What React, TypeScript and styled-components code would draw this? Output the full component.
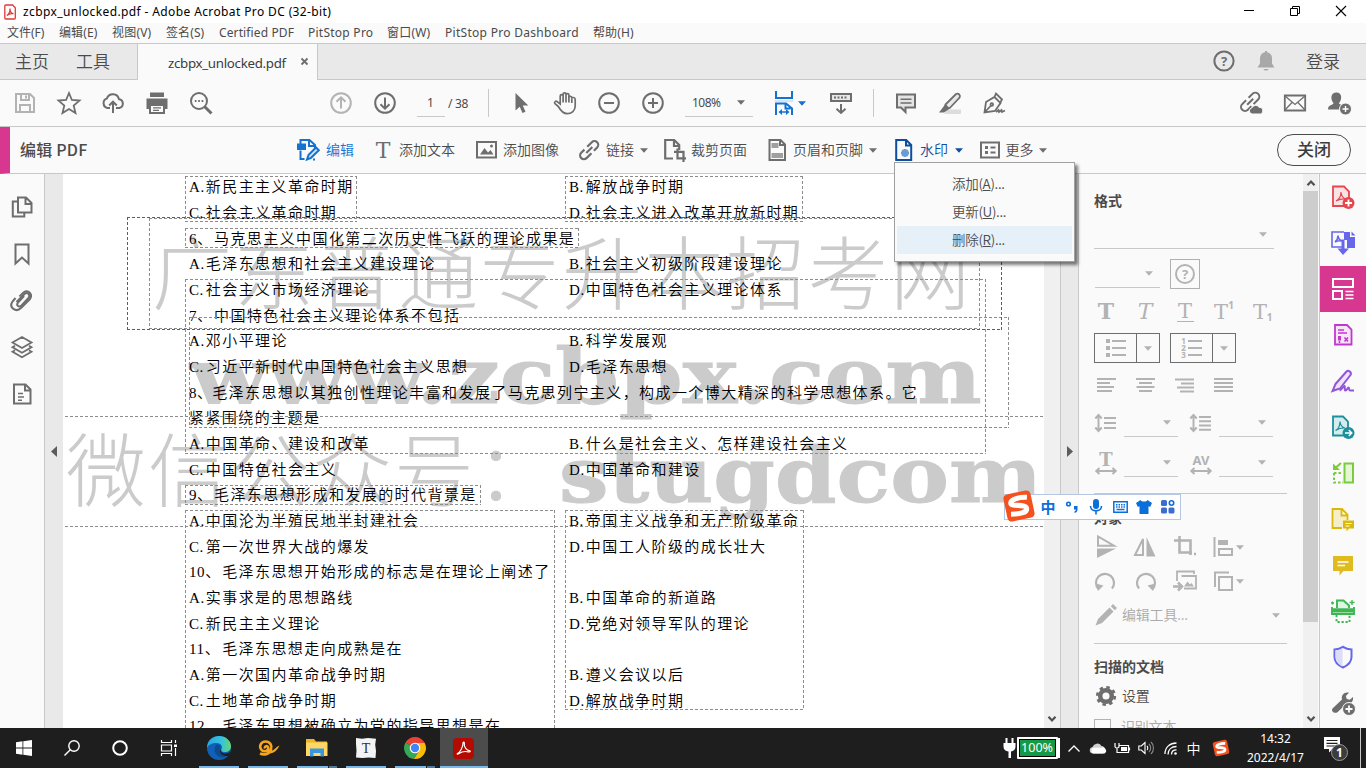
import React from 'react';
import styled, { createGlobalStyle, css } from 'styled-components';

const INK = '#6e6e6e';
const PALE = '#b3b3b3';
const BLUE = '#1473d0';
const NAVY = '#0d4f9e';
const LINE = '#c8c8c8';

const GlobalStyle = createGlobalStyle`
  * { box-sizing: border-box; }
  body { margin: 0; overflow: hidden; background: #fff; }
  svg { display: block; flex: none; overflow: visible; }
`;

const Screen = styled.div`
  width: 1366px;
  height: 768px;
  display: flex;
  flex-direction: column;
  position: relative;
  overflow: hidden;
  background: #fafafa;
  color: #4b4b4b;
  font-family: 'Noto Sans CJK SC', sans-serif;
  font-size: 14px;
  font-weight: 350;
  white-space: nowrap;
`;

/* ---------- icon primitives ---------- */

type IconProps = { w?: number; h?: number; c?: string; sw?: number; fill?: string; children: React.ReactNode };
const Icon = ({ w = 24, h = 24, c = INK, sw = 2, fill = 'none', children }: IconProps) => (
  <svg width={w} height={h} viewBox={`0 0 ${w} ${h}`} fill={fill} stroke={c} strokeWidth={sw}>
    {children}
  </svg>
);

const Caret = ({ c = INK }: { c?: string }) => (
  <svg width="8" height="5" viewBox="0 0 8 5" fill={c}><path d="M0 0.3h8L4 4.8z" /></svg>
);

const Chevron = ({ up }: { up?: boolean }) => (
  <svg width="8" height="6" viewBox="0 0 8 6" fill="none" stroke="#505050" strokeWidth="2.2">
    <path d={up ? 'M0.5 5.2 4 1.5 7.5 5.2' : 'M0.5 0.8 4 4.5 7.5 0.8'} />
  </svg>
);

const T = ({ x, y, s, f = 'DejaVu Serif', b, i, c, children }: {
  x: number; y: number; s: number; f?: string; b?: boolean; i?: boolean; c: string; children: string;
}) => (
  <text x={x} y={y} fontSize={s} fontFamily={`'${f}', serif`} fontWeight={b ? 700 : 400}
    fontStyle={i ? 'italic' : 'normal'} fill={c} stroke="none" textAnchor="middle">{children}</text>
);

/* ---------- title and menu ---------- */

const TitleBar = styled.header`
  height: 23px;
  flex: none;
  display: flex;
  align-items: center;
  background: #fff;
  color: #000;
  padding-left: 4px;
  font: 12px/23px 'Noto Sans', 'Noto Sans CJK SC', sans-serif;
`;
const TitleText = styled.span`
  margin-left: 7px;
  letter-spacing: 0.38px;
  flex: 1;
`;
const WindowButtons = styled.div`
  display: flex;
  align-items: center;
  gap: 34px;
  padding-right: 19px;
`;
const MenuBar = styled.nav`
  height: 21px;
  flex: none;
  display: flex;
  gap: 14px;
  padding-left: 7px;
  border-bottom: 1px solid ${LINE};
  font: 12px/19px 'Noto Sans', 'Noto Sans CJK SC', sans-serif;
`;
const MenuItem = styled.span<{ $w: number; $ls?: number }>`
  width: ${p => p.$w}px;
  letter-spacing: ${p => p.$ls ?? 0}px;
`;

const menus: [string, number, number][] = [
  ['文件(F)', 38, 0], ['编辑(E)', 39, 0.1], ['视图(V)', 40, 0.2], ['签名(S)', 39, 0.1],
  ['Certified PDF', 75, 0.12], ['PitStop Pro', 65, 0.25], ['窗口(W)', 44, 0.2],
  ['PitStop Pro Dashboard', 134, 0.29], ['帮助(H)', 41, 0.1],
];

/* ---------- tabs ---------- */

const TabBar = styled.div`
  height: 36px;
  flex: none;
  display: flex;
  background: #e9e9e9;
`;
const HomeTabs = styled.div`
  width: 137px;
  padding: 0 0 3px 15px;
  display: flex;
  align-items: center;
  gap: 27px;
  font-size: 17px;
  border-bottom: 1px solid ${LINE};
`;
const DocTab = styled.div`
  width: 181px;
  display: flex;
  align-items: center;
  padding: 1px 0 0 30px;
  background: #fafafa;
  border: solid ${LINE};
  border-width: 0 1px;
  color: #3c3c3c;
  font: 13.3px 'Noto Sans', sans-serif;
`;
const TabName = styled.span`
  width: 133px;
  letter-spacing: -0.3px;
`;
const TabRest = styled.div`
  flex: 1;
  display: flex;
  align-items: center;
  justify-content: flex-end;
  gap: 18px;
  padding: 0 26px 1px 0;
  border-bottom: 1px solid ${LINE};
  font-size: 17px;
`;
const Login = styled.span`
  margin-left: 10px;
  line-height: 30px;
`;

/* ---------- main toolbar ---------- */

const ToolBar = styled.div`
  height: 47px;
  flex: none;
  display: flex;
  align-items: center;
  border-bottom: 1px solid ${LINE};
`;
const Group = styled.div<{ $ml?: number }>`
  display: flex;
  align-items: center;
  margin-left: ${p => p.$ml ?? 0}px;
`;
const Slot = styled.div<{ $w?: number }>`
  width: ${p => p.$w ?? 44}px;
  display: flex;
  justify-content: center;
`;
const Divider = styled.i<{ $l: number; $r: number }>`
  width: 1px;
  height: 28px;
  margin: 0 ${p => p.$r}px 0 ${p => p.$l}px;
  background: ${LINE};
`;
const ValueBox = styled.div<{ $w: number; $ml: number; $pl: number }>`
  width: ${p => p.$w}px;
  height: 28px;
  margin-left: ${p => p.$ml}px;
  padding-left: ${p => p.$pl}px;
  display: flex;
  align-items: center;
  border-bottom: 1px solid ${LINE};
  font: 12px 'Noto Sans', sans-serif;
`;
const ZoomText = styled.span`
  width: 45px;
  letter-spacing: -0.5px;
`;
const PageTotal = styled.span`
  width: 22px;
  margin-left: 3px;
  font: 12px 'Noto Sans', sans-serif;
  letter-spacing: -0.3px;
`;

/* ---------- edit toolbar ---------- */

const EditBar = styled.div`
  height: 47px;
  flex: none;
  display: flex;
  align-items: center;
  border-bottom: 1px solid ${LINE};
  border-left: 10px solid #d83790;
`;
const EditTitle = styled.strong`
  width: 286px;
  padding: 0 0 2px 10px;
  font-size: 16px;
  font-weight: 500;
  letter-spacing: 0.2px;
`;
const EditItem = styled.div<{ $w: number; $gap?: number; $c?: string }>`
  width: ${p => p.$w}px;
  display: flex;
  align-items: center;
  padding-bottom: 2px;
  gap: ${p => p.$gap ?? 6}px;
  color: ${p => p.$c ?? '#4b4b4b'};
  & > svg { margin-top: 2px; }
`;
const CloseButton = styled.button`
  width: 74px;
  height: 32px;
  margin: 0 15px 0 auto;
  padding: 0 0 3px;
  border: 1.4px solid #4b4b4b;
  border-radius: 16px;
  background: transparent;
  color: #3c3c3c;
  font: 500 17px 'Noto Sans CJK SC', sans-serif;
`;

/* ---------- body ---------- */

const Body = styled.main`
  height: 554px;
  flex: none;
  display: flex;
  overflow: hidden;
`;
const LeftRail = styled.aside`
  width: 45px;
  display: flex;
  flex-direction: column;
  align-items: center;
  padding-top: 21px;
  gap: 22.8px;
  border-right: 1px solid ${LINE};
`;
const Gutter = styled.div<{ $border?: boolean }>`
  width: 18px;
  display: flex;
  align-items: center;
  justify-content: center;
  background: #e9e9e9;
  ${p => p.$border && css`border-right: 1px solid ${LINE};`}
`;
const Page = styled.article`
  width: 981px;
  position: relative;
  overflow: hidden;
  background: #fff;
  color: #000;
`;
const PageText = styled.div`
  position: relative;
  padding: 1px 0 0 126px;
`;
const TextRow = styled.div`
  height: 25.675px;
  display: grid;
  grid-template-columns: 380px 1fr;
  align-items: center;
  font: 350 15px/25px 'Liberation Serif', 'Noto Sans CJK SC', serif;
  letter-spacing: 1.42px;
`;
const Cell = styled.span`
  display: flex;
`;
const Label = styled.span<{ $w: number }>`
  width: ${p => p.$w}px;
  flex: none;
  letter-spacing: 0.6px;
`;
const Watermark = styled.div<{ $x: number; $y: number }>`
  position: absolute;
  left: ${p => p.$x}px;
  top: ${p => p.$y}px;
  color: #cbcbcb;
  font: 300 80px/100px 'Noto Sans CJK SC', sans-serif;
  letter-spacing: 2px;
`;
const WatermarkLatin = styled(Watermark)<{ $sx: number }>`
  font: 700 77px/100px 'DejaVu Serif', serif;
  letter-spacing: 0;
  transform-origin: 0 0;
  transform: scaleX(${p => p.$sx});
  -webkit-text-stroke: 1px #cbcbcb;
`;
const Frame = styled.i<{ $x: number; $y: number; $r: number; $b: number; $c?: string }>`
  position: absolute;
  left: ${p => p.$x - 63}px;
  top: ${p => p.$y - 174}px;
  width: ${p => p.$r - p.$x + 1}px;
  height: ${p => p.$b - p.$y + 1}px;
  --c: ${p => p.$c ?? '#8c8c8c'};
  background:
    repeating-linear-gradient(90deg, var(--c) 0 3px, transparent 3px 5px) 0 0 / 100% 1px no-repeat,
    repeating-linear-gradient(90deg, var(--c) 0 3px, transparent 3px 5px) 0 100% / 100% 1px no-repeat,
    repeating-linear-gradient(180deg, var(--c) 0 3px, transparent 3px 5px) 0 0 / 1px 100% no-repeat,
    repeating-linear-gradient(180deg, var(--c) 0 3px, transparent 3px 5px) 100% 0 / 1px 100% no-repeat;
`;

const rows: [string, string, string?, string?][] = [
  ['A.', '新民主主义革命时期', 'B.', '解放战争时期'],
  ['C.', '社会主义革命时期', 'D.', '社会主义进入改革开放新时期'],
  ['6、', '马克思主义中国化第二次历史性飞跃的理论成果是'],
  ['A.', '毛泽东思想和社会主义建设理论', 'B.', '社会主义初级阶段建设理论'],
  ['C.', '社会主义市场经济理论', 'D.', '中国特色社会主义理论体系'],
  ['7、', '中国特色社会主义理论体系不包括'],
  ['A.', '邓小平理论', 'B.', '科学发展观'],
  ['C.', '习近平新时代中国特色社会主义思想', 'D.', '毛泽东思想'],
  ['8、', '毛泽东思想以其独创性理论丰富和发展了马克思列宁主义，构成一个博大精深的科学思想体系。它'],
  ['', '紧紧围绕的主题是'],
  ['A.', '中国革命、建设和改革', 'B.', '什么是社会主义、怎样建设社会主义'],
  ['C.', '中国特色社会主义', 'D.', '中国革命和建设'],
  ['9、', '毛泽东思想形成和发展的时代背景是'],
  ['A.', '中国沦为半殖民地半封建社会', 'B.', '帝国主义战争和无产阶级革命'],
  ['C.', '第一次世界大战的爆发', 'D.', '中国工人阶级的成长壮大'],
  ['10、', '毛泽东思想开始形成的标志是在理论上阐述了'],
  ['A.', '实事求是的思想路线', 'B.', '中国革命的新道路'],
  ['C.', '新民主主义理论', 'D.', '党绝对领导军队的理论'],
  ['11、', '毛泽东思想走向成熟是在'],
  ['A.', '第一次国内革命战争时期', 'B.', '遵义会议以后'],
  ['C.', '土地革命战争时期', 'D.', '解放战争时期'],
  ['12、', '毛泽东思想被确立为党的指导思想是在'],
];
const labelWidth = (s: string) => (s === '' ? 0 : s.endsWith('.') ? 16.8 : s.length === 3 ? 33.2 : s[0] === '8' ? 23.2 : 25);

const frames: [number, number, number, number, string?][] = [
  [185, 176, 356, 221], [565, 176, 802, 221], [149, 218, 979, 328],
  [185, 228, 578, 247], [185, 279, 985, 453], [189, 317, 1008, 427], [60, 416, 1050, 526],
  [185, 485, 480, 504], [185, 510, 554, 740], [565, 510, 803, 709], [127, 217, 1001, 329, '#2268c4'],
];

const DocScroll = styled.div`
  width: 17px;
  display: flex;
  justify-content: center;
  align-items: flex-end;
  padding: 0 1px 6px 0;
  background: #f0f0f0;
  border-right: 1px solid ${LINE};
`;

/* ---------- format panel ---------- */

const Panel = styled.section`
  width: 224px;
  padding: 16px 0 0 15px;
  overflow: hidden;
`;
const PanelTitle = styled.h3<{ $mt?: number }>`
  margin: ${p => p.$mt ?? 0}px 0 0;
  height: 20px;
  font-size: 14px;
  line-height: 20px;
  font-weight: 700;
  color: #4b4b4b;
`;
const PanelRow = styled.div<{ $mt: number; $gap?: number }>`
  display: flex;
  align-items: center;
  gap: ${p => p.$gap ?? 0}px;
  margin-top: ${p => p.$mt}px;
`;
const Field = styled.div<{ $w: number; $ml?: number; $mr?: number }>`
  width: ${p => p.$w}px;
  height: 28px;
  margin: 0 ${p => p.$mr ?? 0}px 0 ${p => p.$ml ?? 0}px;
  padding-right: 7px;
  display: flex;
  align-items: center;
  justify-content: flex-end;
  border-bottom: 1px solid ${LINE};
`;
const HelpBox = styled.div`
  width: 30px;
  height: 30px;
  display: grid;
  place-items: center;
  border: 1px solid #b0b0b0;
`;
const SplitButton = styled.div`
  width: 66px;
  height: 30px;
  display: grid;
  grid-template-columns: 41px 1fr;
  border: 1px solid #6e6e6e;
  & > span { display: grid; place-items: center; }
  & > span + span { border-left: 1px solid #6e6e6e; }
`;
const Rule = styled.hr<{ $mt: number }>`
  width: 193px;
  height: 1px;
  margin: ${p => p.$mt}px 0 0;
  border: 0;
  background: ${LINE};
`;
const PanelLabel = styled.span<{ $pale?: boolean; $w?: number }>`
  width: ${p => p.$w ?? 150}px;
  margin-left: 4px;
  padding-bottom: 2px;
  line-height: 22px;
  letter-spacing: -0.2px;
  color: ${p => (p.$pale ? '#aaa' : '#4b4b4b')};
`;
const CheckBox = styled.i`
  width: 17px;
  height: 17px;
  margin-right: 6px;
  border: 1px solid #b3b3b3;
`;
const PanelScroll = styled.div`
  width: 15px;
  display: flex;
  flex-direction: column;
  align-items: center;
  padding: 6px 0;
  background: #f0f0f0;
`;
const Thumb = styled.i`
  width: 15px;
  height: 431px;
  margin: 5px 0 auto;
  background: #cdcdcd;
`;
const RightRail = styled.aside`
  width: 47px;
  margin-left: 1px;
  display: flex;
  flex-direction: column;
  border-left: 1px solid ${LINE};
`;
const RailSlot = styled.div<{ $on?: boolean }>`
  height: 46px;
  flex: none;
  display: grid;
  place-items: center;
  background: ${p => (p.$on ? '#d83790' : 'transparent')};
`;

/* ---------- popup menu ---------- */

const Popup = styled.div`
  position: absolute;
  left: 894px;
  top: 162px;
  width: 181px;
  height: 100px;
  padding: 7px 2px;
  background: #fafafa;
  border: 1px solid #a0a0a0;
  box-shadow: 3px 3px 3px rgba(0, 0, 0, 0.5);
`;
const PopupItem = styled.div<{ $on?: boolean }>`
  height: 28px;
  padding-left: 55px;
  font: 350 13.5px/27px 'Noto Sans CJK SC', sans-serif;
  letter-spacing: -0.3px;
  background: ${p => (p.$on ? '#e5f0f9' : 'transparent')};
`;

/* ---------- input method bar ---------- */

const ImeBar = styled.div`
  position: absolute;
  left: 1004px;
  top: 494px;
  width: 177px;
  height: 26px;
  display: flex;
  align-items: center;
  border: 1px solid #b4c8e6;
  background: #fff;
  padding-left: 31px;
`;
const ImeLogo = styled.div`
  position: absolute;
  left: -3px;
  top: -6px;
`;
const ImeSlot = styled.span`
  width: 24px;
  display: flex;
  justify-content: center;
  color: #0a6fdb;
  font: 700 15px/22px 'Noto Sans CJK SC', sans-serif;
`;

/* ---------- taskbar ---------- */

const TaskBar = styled.footer`
  height: 40px;
  flex: none;
  display: flex;
  background: #1e1e1e;
  color: #fff;
`;
const TaskButton = styled.div<{ $w: number; $run?: boolean; $on?: boolean; $multi?: boolean }>`
  width: ${p => p.$w}px;
  display: grid;
  place-items: center;
  ${p => p.$run && css`
    margin: 0 4.5px;
    background: linear-gradient(#76b9ed, #76b9ed) 0 100% / 100% 2px no-repeat;
  `}
  ${p => p.$multi && css`
    background: linear-gradient(90deg, #76b9ed 31px, #1e1e1e 31px 32px, #4d7ba0 32px) 0 100% / 100% 2px no-repeat;
  `}
  ${p => p.$on && css`
    background: linear-gradient(#76b9ed, #76b9ed) 0 100% / 100% 2px no-repeat, #4c4c4c;
  `}
`;
const Tray = styled.div`
  flex: 1;
  display: flex;
  align-items: center;
  padding-left: 514px;
`;
const Battery = styled.div`
  width: 41px;
  height: 22px;
  margin-right: 3px;
  border: 2px solid #fff;
  border-radius: 1px;
  box-shadow: 3px 0 0 -1px #fff;
  background: #149947;
  outline: 1px solid #000;
  outline-offset: -3px;
  text-align: center;
  font: 12.5px/17px 'Noto Sans', sans-serif;
`;
const Clock = styled.div`
  width: 90px;
  text-align: center;
  font: 12px/19px 'Noto Sans', sans-serif;
`;
const Ime = styled.span`
  font-size: 14px;
`;

const question = (c: string, r = 9.6) => (
  <Icon c={c}><circle cx="12" cy="12" r={r} /><T x={12} y={16.6} s={13} f="Noto Sans" b c={c}>?</T></Icon>
);

const SogouMark = ({ s }: { s: number }) => (
  <svg width={s} height={s} viewBox="0 0 32 32">
    <g transform="rotate(-12 16 16)">
      <rect x="3" y="3" width="26" height="26" rx="4" fill="#f4511e" />
      <path d="M25 9.5C17 7.5 9 8.500 9 12s13.500 3 13.500 7.500-8 4-15.500 2.500" fill="none" stroke="#fff" strokeWidth="4.800" />
    </g>
  </svg>
);

const lineSpacing = (n: number) => (
  <Icon c={PALE}>
    <path d="M4.5 5v14M1.3 7.5 4.5 4l3.2 3.5M1.3 16.5 4.5 20l3.2-3.5" />
    {n === 3 ? <path d="M10 7h12M10 12h12M10 17h12" /> : <path d="M10 6h12M10 10.3h12M10 14.6h12M10 18.8h12" />}
  </Icon>
);

const App = () => (
  <Screen>
    <GlobalStyle />
    <TitleBar>
      <Icon w={12} h={16} c="#e03a32" sw={1.3} fill="#fff">
        <path d="M1.8 1h6.7l2.8 2.8V14a1 1 0 0 1-1 1H1.8a1 1 0 0 1-1-1V2a1 1 0 0 1 1-1z" />
        <path d="M2.8 11.5C4.6 10.5 6 7.300 6 4.500c0 3 1.600 5 3.500 5.200C7 9.300 4.500 10 2.800 11.500z" strokeWidth="1.2" />
      </Icon>
      <TitleText>zcbpx_unlocked.pdf - Adobe Acrobat Pro DC (32-bit)</TitleText>
      <WindowButtons>
        <Icon w={12} h={12} c="#000" sw={1}><path d="M1 4.500h10" /></Icon>
        <Icon w={12} h={12} c="#000" sw={1}><path d="M1.500 2.500h7v7h-7zM3.500 2.500v-2h7v7h-2" /></Icon>
        <Icon w={12} h={12} c="#000" sw={1.1}><path d="M1 0l10 10M11 0 1 10" /></Icon>
      </WindowButtons>
    </TitleBar>
    <MenuBar>{menus.map(([t, w, ls]) => <MenuItem key={t} $w={w} $ls={ls}>{t}</MenuItem>)}</MenuBar>
    <TabBar>
      <HomeTabs><span>主页</span><span>工具</span></HomeTabs>
      <DocTab>
        <TabName>zcbpx_unlocked.pdf</TabName>
        <Icon w={7} h={7} sw={1.8}><path d="M0.500 -0.500l6 6M6.500 -0.500l-6 6" /></Icon>
      </DocTab>
      <TabRest>
        {question(INK)}
        <Icon fill="#a8a8a8" c="none">
          <path d="M11 2h2v1.300c3.500.6 5 3 5 6.200v5l2.500 4H3.500l2.500-4V9.500c0-3.200 1.500-5.600 5-6.200zM9.500 20h5c-.6 2-4.400 2-5 0z" />
        </Icon>
        <Login>登录</Login>
      </TabRest>
    </TabBar>

    <ToolBar>
      <Group $ml={3}>
        <Slot><Icon c={PALE}><path d="M3 3h14l4 4v14H3zM8 3v6h8V3M7 21v-7h10v7" /><path d="M13 4.500v3" /></Icon></Slot>
        <Slot><Icon sw={1.8}><path d="M12 2l2.900 7 7.600.6-5.800 5 1.800 7.400-6.500-4-6.500 4 1.800-7.400-5.800-5 7.600-.6z" /></Icon></Slot>
        <Slot><Icon><path d="M9 17H6.500a5 5 0 0 1-.6-9.600A6.300 6.300 0 0 1 18 8.200a4.500 4.500 0 0 1 .5 8.800H15M12 22V11M8.200 14.500 12 10.700l3.800 3.800" /></Icon></Slot>
        <Slot $w={43}>
          <Icon c="none" fill={INK}>
            <path d="M5 1.500h14v4.500H5zM1.500 7.500h21V18H19v-4H5v4H1.500z" />
            <path d="M5 14h14v8H5z" fill="#fafafa" stroke={INK} strokeWidth="2" /><path d="M8 16.800h8M8 19.300h6" stroke={INK} strokeWidth="1.200" />
          </Icon>
        </Slot>
        <Slot $w={45}><Icon><circle cx="10" cy="10" r="8" /><path d="M15.500 15.500l7 7" strokeWidth="3" /><path d="M5.800 10h1.700M9.200 10h1.700M12.600 10h1.700" /></Icon></Slot>
      </Group>
      <Group $ml={96}>
        <Slot><Icon c={PALE}><circle cx="12" cy="12" r="9.800" /><path d="M12 17.500v-11M7.500 10.800 12 6.300l4.500 4.500" /></Icon></Slot>
        <Slot><Icon><circle cx="12" cy="12" r="9.800" /><path d="M12 6.500v11M7.500 13.200l4.500 4.500 4.500-4.500" /></Icon></Slot>
      </Group>
      <ValueBox $w={28} $ml={10} $pl={10}>1</ValueBox>
      <PageTotal>/ 38</PageTotal>
      <Divider $l={18} $r={10} />
      <Group>
        <Slot><Icon c="none" fill={INK}><path d="M6.500 2v17.500l4.200-3.800 2.800 6.300 3-1.300-2.700-6.200h5.500z" /></Icon></Slot>
        <Slot>
          <Icon sw={1.700}>
            <path d="M5.300 15.500 2 12.700c-1.200-1.300.5-3.200 2.200-2.100L7.200 13V5c0-1.900 2.900-1.900 2.900 0V3.200c0-1.900 2.900-1.900 2.900 0V4c0-1.900 2.900-1.900 2.900 0v2.500c.2-1.800 2.900-1.600 2.900.3 0 0 3.200-1.300 3.400 1.500V15c0 4.500-3.500 7.700-8 7.700-4.300 0-6.500-3-8.900-7.200z" />
            <path d="M10.100 5v6.500M13 4v7.500M15.900 5.500v6M18.800 7.500V12" />
          </Icon>
        </Slot>
        <Slot><Icon><circle cx="12" cy="12" r="9.800" /><path d="M7 12h10" /></Icon></Slot>
        <Slot><Icon><circle cx="12" cy="12" r="9.800" /><path d="M7 12h10M12 7v10" /></Icon></Slot>
      </Group>
      <ValueBox $w={68} $ml={10} $pl={7}><ZoomText>108%</ZoomText><Caret /></ValueBox>
      <Group $ml={19}>
        <Slot $w={24}>
          <Icon c={BLUE}><path d="M3 9h18v2H3z" fill="#d4e6f7" stroke="none" /><path d="M4 0v7h16V0M4 24V12.500h10l6 5V24M13.500 12.500v5h5" /><path d="M8 21h8" strokeWidth="1.500" /><path d="M10 18l-3.500 3 3.500 3zM14 18l3.500 3-3.500 3z" fill={BLUE} stroke="none" /></Icon>
        </Slot>
        <Slot $w={12}><Caret c={BLUE} /></Slot>
        <Slot $w={66}>
          <Icon><path d="M2 3h20v7H2z" fill="#e8e8e8" /><path d="M5 6.500h2M8.500 6.500h2M12 6.500h2M15.500 6.500h2" /><path d="M12 13v9M7.500 17.800l4.500 4.200 4.500-4.200" /></Icon>
        </Slot>
      </Group>
      <Divider $l={-1} $r={10} />
      <Group>
        <Slot><Icon><path d="M3 3.500h18v13h-9.500V21L7 16.500H3z" fill="#e4e4e4" /><path d="M6.500 8.300h11M6.500 12h11" strokeWidth="1.500" /></Icon></Slot>
        <Slot>
          <Icon c="none"><path d="M9 18.500h14v4.500H6z" fill="#dcdcdc" /><path d="M7.500 13.500 18 3c2.500-1.200 4.800 1 3.600 3.600L11.800 17l-5 .5z" fill="#e8e8e8" stroke={INK} strokeWidth="1.800" /><path d="M7.500 13l4.500 4.500-6 4H1z" fill={INK} /></Icon>
        </Slot>
        <Slot>
          <Icon sw={1.8}><path d="M2.500 21.500 4 11l8.500-5 6 6-5.500 8zM3 21l6-6.500M12.500 6 14 2.500l6 6-2 3.500" /><circle cx="9.800" cy="13.500" r="1.300" /><path d="M14 21l2.500-2 .5 2 2.500-2 .5 2 3-1.500" /></Icon>
        </Slot>
      </Group>
      <Group $ml={213}>
        <Slot>
          <Icon>
            <g transform="rotate(-45 11 11)"><path d="M13 7h5.500a4 4 0 0 1 0 8H12M9.500 7H4a4 4 0 0 0 0 8h5M7 11h8.500" /></g>
            <path d="M13 23a3.200 3.200 0 0 1 0-6.300 4 4 0 0 1 7-.5 3.500 3.500 0 0 1 1.500 6.800z" fill={INK} stroke="#fafafa" strokeWidth="1" />
          </Icon>
        </Slot>
        <Slot><Icon sw={1.8}><path d="M1.800 4.500h20.400v15H1.800z" /><path d="M2 5l10 8.500L22 5M2 19l7-7.500M22 19l-7-7.500" strokeWidth="1.300" /></Icon></Slot>
        <Slot>
          <Icon c="none" fill={INK}>
            <path d="M9.500 1.500c6 0 5.500 7.500 2.500 10.500 0 2 5.500 1.500 5.500 6.500H1c0-5.500 5.500-4 5.500-6.500C3.500 9 3 1.500 9.500 1.500z" /><circle cx="18.500" cy="18" r="6" stroke="#fafafa" strokeWidth="1" /><path d="M15.500 18h6M18.500 15v6" stroke="#fff" strokeWidth="1.400" />
          </Icon>
        </Slot>
      </Group>
    </ToolBar>

    <EditBar>
      <EditTitle>编辑 PDF</EditTitle>
      <EditItem $w={79} $gap={6} $c={BLUE}>
        <Icon c={BLUE} sw={2}>
          <path d="M1 5.500h9v6.500H1z" fill={BLUE} stroke="none" /><path d="M4.500 6V2h9l5.500 5v3M13 2v6h6M4.500 12.500v8.500h4" /><path d="M12.500 17 20 9.500l2.800 2.800-7.800 7.500-4 1.700z" fill="#d4e6f7" /><path d="M17 21.500h2" />
        </Icon>
        编辑
      </EditItem>
      <EditItem $w={101} $gap={8}><Icon w={16}><T x={8} y={19.500} s={22} c={INK}>T</T></Icon>添加文本</EditItem>
      <EditItem $w={102} $gap={6}>
        <Icon w={21}><path d="M1 4h19v15.500H1z" /><path d="M4 16.500l4.500-6.500 3.500 4.500 2.500-2.500 3 4.500z" fill={INK} stroke="none" /><circle cx="15.500" cy="8" r="1.500" fill={INK} stroke="none" /></Icon>
        添加图像
      </EditItem>
      <EditItem $w={86} $gap={6}>
        <Icon w={22} sw={2.2}><g transform="rotate(-45 11 12)"><path d="M12 8.500h6.500a3.500 3.500 0 0 1 0 7.500H14M10.500 16H3.500a3.500 3.500 0 0 1 0-7.500H8M7 12.200h8.500" /></g></Icon>
        <span>链接</span><Caret />
      </EditItem>
      <EditItem $w={104} $gap={6}>
        <Icon w={21} sw={2.200}><path d="M9 20.500H1.200V2h9l5 5v5M10 2v6h5.500" /><path d="M10 13.800h9.500V24M13.500 10.500V20.300H22" /></Icon>
        裁剪页面
      </EditItem>
      <EditItem $w={127} $gap={6}>
        <Icon w={19}><path d="M1.500 2h11L17 6.500V22H1.500z" /><path d="M3.500 5h7v5h-7zM3.500 15h11.500v5H3.500z" fill="#a0a0a0" stroke="none" /><path d="M12 2v5h5" /></Icon>
        页眉和页脚<Caret />
      </EditItem>
      <EditItem $w={85} $gap={7} $c={NAVY}>
        <Icon w={18} c={NAVY}><path d="M1.200 2h10l5 5v15h-15zM11 2v5.500h5" /><path d="M10 11v8M6 15h8M7.200 12.200l5.600 5.600M12.800 12.200l-5.600 5.600" stroke="#6b9bd0" strokeWidth="2.400" /></Icon>
        <span>水印</span><Caret c={NAVY} />
      </EditItem>
      <EditItem $w={80} $gap={5.500}>
        <Icon w={20}><path d="M1 4.500h18v15H1z" /><path d="M5 9.500h3M5 14.500h3" strokeWidth="3" /><path d="M10.500 9.500h5M10.500 14.500h5" /></Icon>
        更多<Caret />
      </EditItem>
      <CloseButton>关闭</CloseButton>
    </EditBar>

    <Body>
      <LeftRail>
        <Icon><path d="M8 2.500h8l5.500 5.500v9.500H8zM15.500 3v6H21M7.500 6.500H2.800V21.500h11.500V18" /></Icon>
        <Icon><path d="M5.500 2.500h13v19L12 15.500l-6.500 6z" /></Icon>
        <Icon sw={2}><path d="M6 13.500 14 5.500c3-2.500 6.500 1 4 4l-7 7.500c-3 2.500-5.500-.5-3.500-3l6-6.500" transform="translate(0.500 -0.500)" /><path d="M5.500 9.500l-3 3.500c-4 6 3.500 11.500 8.500 6.500L20 10.500c3-4.500-1.500-10-6.500-6.500L9.500 8" transform="translate(0 -0.500)" /></Icon>
        <Icon sw={1.8}><path d="M12 2l9.500 5.500L12 13 2.500 7.500zM5 10.800l-2.500 1.500 9.500 5.500 9.500-5.500-2.500-1.500M5 15.300l-2.500 1.500L12 22.300l9.500-5.500-2.500-1.500" /></Icon>
        <Icon><path d="M4 2.500h11.500l5 5V21.500H4zM15 3v5.500h5" /><path d="M8 11.500h5M8 15h6M8 18.200h4" strokeWidth="1.500" /></Icon>
      </LeftRail>
      <Gutter><svg width="6" height="11" viewBox="0 0 6 11"><path d="M6 0v11L0 5.500z" fill="#5c5c5c" /></svg></Gutter>
      <Page>
        <Watermark $x={89} $y={44}>广东普通专升本招考网</Watermark>
        <Watermark $x={3} $y={241}>微信公众号：</Watermark>
        <WatermarkLatin $x={127} $y={152} $sx={1.184}>www.zcbpx.com</WatermarkLatin>
        <WatermarkLatin $x={496} $y={251} $sx={1.144}>stugdcom</WatermarkLatin>
        <PageText>
          {rows.map(([l1, t1, l2, t2], i) => (
            <TextRow key={i}>
              <Cell><Label $w={labelWidth(l1)}>{l1}</Label>{t1}</Cell>
              {l2 && <Cell><Label $w={labelWidth(l2)}>{l2}</Label>{t2}</Cell>}
            </TextRow>
          ))}
        </PageText>
        {frames.map(([x, y, r, b, c]) => <Frame key={`${x}-${y}`} $x={x} $y={y} $r={r} $b={b} $c={c} />)}
      </Page>
      <DocScroll><Chevron /></DocScroll>
      <Gutter $border><svg width="6" height="11" viewBox="0 0 6 11"><path d="M0 0v11l6-5.500z" fill="#5c5c5c" /></svg></Gutter>
      <Panel>
        <PanelTitle>格式</PanelTitle>
        <PanelRow $mt={11}><Field $w={180}><Caret c={PALE} /></Field></PanelRow>
        <PanelRow $mt={10} $gap={10}><Field $w={65} $ml={1}><Caret c={PALE} /></Field><HelpBox>{question(PALE, 9)}</HelpBox></PanelRow>
        <PanelRow $mt={10} $gap={15.25}>
          <Icon c={PALE}><T x={12} y={19.500} s={22} b c={PALE}>T</T></Icon>
          <Icon c={PALE}><T x={12} y={19.500} s={22} i c={PALE}>T</T></Icon>
          <Icon c={PALE} sw={1}><T x={12} y={19} s={21} c={PALE}>T</T><path d="M4 22.500h17" /></Icon>
          <Icon c={PALE}><T x={9} y={19.500} s={21} c={PALE}>T</T><T x={19} y={10} s={10} f="Noto Sans" b c={PALE}>1</T></Icon>
          <Icon c={PALE}><T x={9} y={19.500} s={21} c={PALE}>T</T><T x={18.500} y={22} s={10} f="Noto Sans" b c={PALE}>1</T></Icon>
        </PanelRow>
        <PanelRow $mt={10} $gap={10}>
          <SplitButton>
            <span><Icon c={PALE}><path d="M8 5h14M8 12h14M8 19h14" /><path d="M2 5h4M2 12h4M2 19h4" strokeWidth="4" /></Icon></span>
            <span><Caret c={PALE} /></span>
          </SplitButton>
          <SplitButton>
            <span><Icon c={PALE}><path d="M8 5h14M8 12h14M8 19h14" /><T x={3.500} y={8} s={8} f="Noto Sans" b c={PALE}>1</T><T x={3.500} y={15} s={8} f="Noto Sans" b c={PALE}>2</T><T x={3.500} y={22} s={8} f="Noto Sans" b c={PALE}>3</T></Icon></span>
            <span><Caret c={PALE} /></span>
          </SplitButton>
        </PanelRow>
        <PanelRow $mt={10} $gap={15.25}>
          <Icon c={PALE} sw={1.800}><path d="M3 6h19M3 10h13M3 14h17M3 18h15" /></Icon>
          <Icon c={PALE} sw={1.800}><path d="M3 6h19M6 10h13M3.500 14h18M6 18h13" /></Icon>
          <Icon c={PALE} sw={1.800}><path d="M2 6.500h19M8 10.500h13M4 14.500h17M7 18.500h14" /></Icon>
          <Icon c={PALE} sw={1.800}><path d="M2 6h19M2 10h19M2 14h19M2 18h19" /></Icon>
        </PanelRow>
        <PanelRow $mt={12}>
          {lineSpacing(3)}<Field $w={54} $ml={6} $mr={11}><Caret c={PALE} /></Field>
          {lineSpacing(4)}<Field $w={54} $ml={6}><Caret c={PALE} /></Field>
        </PanelRow>
        <PanelRow $mt={12}>
          <Icon c={PALE}><T x={12} y={15} s={18} b c={PALE}>T</T><path d="M3 20h18M5.500 17 2.300 20l3.200 3M18.500 17l3.200 3-3.200 3" /></Icon>
          <Field $w={54} $ml={6} $mr={11}><Caret c={PALE} /></Field>
          <Icon c={PALE}><T x={12} y={14} s={13} f="Noto Sans" b c={PALE}>AV</T><path d="M3 20h18M5.500 17 2.300 20l3.200 3M18.500 17l3.200 3-3.200 3" /></Icon>
          <Field $w={54} $ml={6}><Caret c={PALE} /></Field>
        </PanelRow>
        <Rule $mt={16} />
        <PanelTitle $mt={13}>对象</PanelTitle>
        <PanelRow $mt={8} $gap={15.25}>
          <Icon c={PALE}><path d="M4 1.500v9.200h16z" /><path d="M3 13.500h19L3 23z" fill={PALE} stroke="none" /></Icon>
          <Icon c={PALE}><path d="M10 4v16H2z" /><path d="M13.500 2v19.500h9z" fill={PALE} stroke="none" /></Icon>
          <Icon c={PALE} sw={2.600}><path d="M6.500 1v16.500H19M1 5.500h16.500V20M21 19h2" /></Icon>
          <Group><Icon c={PALE}><path d="M2.500 2v20" /><path d="M6 5h10v5H6z" fill={PALE} stroke="none" /><path d="M7 14h13v6H7z" /></Icon><Slot $w={9}><Caret c={PALE} /></Slot></Group>
        </PanelRow>
        <PanelRow $mt={10} $gap={15.25}>
          <Icon c={PALE} sw={2.200}><path d="M4.500 20A9 9 0 1 1 18 19.500" /><path d="M1.500 14.500l8 2-5.500 5.500z" fill={PALE} stroke="none" /></Icon>
          <Icon c={PALE} sw={2.200}><path d="M19.500 20A9 9 0 1 0 6 19.500" /><path d="M22.500 14.500l-8 2 5.500 5.500z" fill={PALE} stroke="none" /></Icon>
          <Icon c={PALE} sw={1.800}><path d="M4 12V2.500h17V5M8.500 7H23v12.500H11" /><path d="M11 17.500l3.500-5 2.500 3 1.500-1.500 2.500 3.500z" fill={PALE} stroke="none" /><path d="M0 17.500h7M5 13.500l4 4-4 4" strokeWidth="2.500" /></Icon>
          <Group><Icon c={PALE}><path d="M7 8h13v13H7zM3 18V3.500h14" /></Icon><Slot $w={9}><Caret c={PALE} /></Slot></Group>
        </PanelRow>
        <PanelRow $mt={10}>
          <Icon c="none" fill={PALE}><path d="M4 16 15.500 4.500l4 4L8 20l-6.500 2.500zM16.800 3.200l2.200-2.200 4 4-2.200 2.200z" /></Icon>
          <PanelLabel $pale>编辑工具...</PanelLabel><Caret c={PALE} />
        </PanelRow>
        <Rule $mt={16} />
        <PanelTitle $mt={12}>扫描的文档</PanelTitle>
        <PanelRow $mt={8}>
          <Icon><circle cx="12" cy="12" r="5.800" strokeWidth="4.500" /><circle cx="12" cy="12" r="8.800" strokeWidth="2.600" strokeDasharray="3.460 3.460" /></Icon>
          <PanelLabel>设置</PanelLabel>
        </PanelRow>
        <PanelRow $mt={7}><CheckBox /><PanelLabel $pale>识别文本</PanelLabel></PanelRow>
      </Panel>
      <PanelScroll><Chevron up /><Thumb /><Chevron /></PanelScroll>
      <RightRail>
        <RailSlot>
          <Icon c="#e34850" sw={1.800}>
            <path d="M2 1.500h11l5 5V21H2z" fill="#fbe3e4" /><path d="M5 16c3-1.500 5-5 5-9 .5 4 2.500 6.500 5 7-3-.5-7 .5-10 2z" strokeWidth="1.200" />
            <circle cx="17.500" cy="18" r="6" fill="#e34850" stroke="none" /><path d="M14 18h7M17.500 14.500v7" stroke="#fff" strokeWidth="1.800" />
          </Icon>
        </RailSlot>
        <RailSlot>
          <Icon c="#6767ec" sw={1.800}>
            <path d="M12 16H1V1h12M4 11c2-1.500 3-4 3-6.500 0 3 1.500 4.500 4 5.500-2-.5-5 0-7 1z" strokeWidth="1.600" /><path d="M13 1h6v5h5v11h-8V9h-3z" fill="#6767ec" stroke="none" /><path d="M20.500 0.500v4h4z" fill="#6767ec" stroke="none" />
            <path d="M12 8.500v10" strokeWidth="3" /><path d="M6.500 17.500h11.500L12 24z" fill="#6767ec" stroke="none" />
          </Icon>
        </RailSlot>
        <RailSlot $on>
          <Icon c="#fff"><path d="M2 2h20v8H2zM2 14h9v8H2z" /><path d="M14.500 14.500h8M14.500 18h8M14.500 21.500h8" strokeWidth="1.300" /></Icon>
        </RailSlot>
        <RailSlot>
          <Icon c="#c038cc" sw={1.800}><path d="M4 2h12l4.500 4.500V21.500H4z" fill="#f6e4f8" /><path d="M7 7h6M7 10h9" strokeWidth="1.300" /><path d="M8.500 13v4.500" strokeWidth="3" /><path d="M13.500 14.500l3.500 4M17 14.500l-3.500 4" strokeWidth="1.600" /><path d="M8.500 18v2" strokeWidth="1.500" /></Icon>
        </RailSlot>
        <RailSlot>
          <Icon c="#9256d9" sw={2}><path d="M4.500 15 15.500 2.500c2-2 5.500 1 4 3.500L9 19.500 1.500 22z" fill="#eee4fa" /><path d="M8.500 21.500c2.500-.5 4-5 5-4.500s-.5 4.500 1 4.500 2-3 3-3 0 3 1.500 3H23" /></Icon>
        </RailSlot>
        <RailSlot>
          <Icon c="#1c8f9b" sw={1.800}>
            <path d="M2 1.500h10l5 5V20.500H2z" fill="#d5ecee" /><path d="M4.500 15.500c3-1.500 4.500-5 4.500-9 .5 4 2.500 6 5 6.500-3-.3-6.500.8-9.500 2.500z" strokeWidth="1.200" />
            <circle cx="17.500" cy="18" r="6" fill="#1c8f9b" stroke="none" /><path d="M14 18h6.500M17.800 15l3 3-3 3" stroke="#fff" strokeWidth="1.400" />
          </Icon>
        </RailSlot>
        <RailSlot>
          <Icon c="#7acb3d" sw={2}><path d="M13.500 2.500h8.500v19h-8.500z" fill="#e4f5d8" /><path d="M3 12h8M3 12v9.500h9" strokeDasharray="2.500 2" /><path d="M2 2.500v6.500h7z" fill="#7acb3d" stroke="none" /><path d="M10 2 5 6.500" /></Icon>
        </RailSlot>
        <RailSlot>
          <Icon c="#dbb90a" sw={1.800}><path d="M11 21H1.500V2h9.500l5.500 5.500V13M10.500 2.500v6h6" fill="#f5eecb" /><path d="M12 13.500h11v8h-5l-2.500 3v-3H12z" fill="#dbb90a" stroke="none" /><path d="M14.500 16.500h6M14.500 19h4" stroke="#fff" strokeWidth="1.200" /></Icon>
        </RailSlot>
        <RailSlot>
          <Icon c="none"><path d="M2 3h20v15h-9.500l-4 4.500V18H2z" fill="#dfbb1f" /><path d="M6.500 9h11M6.500 12.500h7.500" stroke="#fff" strokeWidth="1.600" /></Icon>
        </RailSlot>
        <RailSlot>
          <Icon c="#3cb650" sw={1.900}><path d="M6 9V1.500h6.500L18 6.500V9" fill="#e0f4e3" /><path d="M1 8v7h22V8M1 10.500h22" /><path d="M2 9.500h20v4H2z" fill="#3cb650" stroke="none" /><path d="M5.500 16V23h13v-7" strokeDasharray="2.200 1.800" /><path d="M21 1v5M18.500 3.500h5M1.500 2.500v3M0 4h3" strokeWidth="1.300" /></Icon>
        </RailSlot>
        <RailSlot>
          <Icon c="#6767ec"><path d="M12 1.800c2.800 1.800 5.300 2.500 8.500 2.700V12c0 5-4 8.500-8.500 10.500C7.500 20.500 3.500 17 3.500 12V4.500c3.200-.2 5.700-.9 8.500-2.700z" /><path d="M11.500 3v18.500C7.500 19.500 4.500 16 4.500 12V5.500c3-.3 5-1 7-2.500z" fill="#dcdcf8" stroke="none" /></Icon>
        </RailSlot>
        <RailSlot>
          <Icon c="none" fill={INK}>
            <path d="M1.500 17.500 11 8.500C10 4 13.500.5 18 1.800L14.800 5l1 3 3 .8L22 6c.8 4-2.300 7.300-6.300 6.500l-9 8.500c-3 2.500-7-1-5.200-3.500z" /><circle cx="18" cy="18" r="6.500" stroke="#fafafa" strokeWidth="1" /><path d="M14.500 18h7M18 14.500v7" stroke="#fff" strokeWidth="1.800" />
          </Icon>
        </RailSlot>
      </RightRail>
    </Body>

    <TaskBar>
      <TaskButton $w={48}><Icon w={16} h={16} c="none" fill="#fff"><path d="M0 2.200l6.500-.9v6.300H0zM7.300 1.200 16 0v7.600H7.300zM0 8.400h6.500v6.300L0 13.800zM7.300 8.400H16V16l-8.700-1.200z" /></Icon></TaskButton>
      <TaskButton $w={48}><Icon w={16} h={16} c="#fff" sw={1.400}><circle cx="10" cy="6" r="5.200" /><path d="M6.300 9.700 0.500 15.500" /></Icon></TaskButton>
      <TaskButton $w={48}><Icon w={16} h={16} c="#fff" sw={2}><circle cx="8" cy="8" r="6.800" /></Icon></TaskButton>
      <TaskButton $w={50.500}><Icon w={18} h={16} c="#fff" sw={1.200}><path d="M1.500 0v2.500h10V0M1.500 5h10v6h-10zM1.500 16v-2.500h10V16M15.500 0v3M15.500 8v8" /><path d="M14 4.500h3v2.500h-3z" fill="#fff" stroke="none" /></Icon></TaskButton>
      <TaskButton $w={40} $run>
        <svg width="24" height="24" viewBox="0 0 24 24">
          <defs><linearGradient id="edgeTop" x1="0" x2="1"><stop offset="0" stopColor="#2aa5e0" /><stop offset="0.600" stopColor="#35c1e0" /><stop offset="1" stopColor="#66d96c" /></linearGradient></defs>
          <circle cx="12" cy="12" r="12" fill="#1160b7" />
          <path d="M0 12C0 4 6 0 12 0c7 0 12 5 12 10 0 4-3 6-6 6-3.500 0-4.500-1.500-3.500-3 1.500-2.500-.5-6-5-6C5 7 1 9 0 12z" fill="url(#edgeTop)" />
          <path d="M9 9c-3 4-1.500 10 4 12 3 1 6 0 8-2-3 1-8 0-8.500-5 .3-1 1.500-1.500 1-3C13 9 11 8 9 9z" fill="#0c4a93" />
          <path d="M14.500 13c-1.500 2 0 4.500 4 4.500 2 0 4-1 5-2.500l-2 5c-4 .5-9-1.500-8.500-6z" fill="#1e1e1e" />
        </svg>
      </TaskButton>
      <TaskButton $w={40} $run>
        <Icon w={24} h={18} c="#f5a61d" sw={2.600}><path d="M9 9.500C8 7 12 6 12.300 9c.2 3-4 4.500-6.800 2C2.500 7.500 5 2.500 9.500 2.500c4.500 0 7 4 5.500 8-1.500 4.500-6.500 6-11 4" /><path d="M14.500 12c3.500 0 5-4 9-5.500-2 4-5 8-10 8z" fill="#f5a61d" stroke="none" /></Icon>
      </TaskButton>
      <TaskButton $w={40} $run $multi>
        <Icon w={22} h={19} c="none"><path d="M0 0h8l2 2.500h11V17H0z" fill="#f0b429" /><path d="M0 3.500h21.500V17H0z" fill="#ffd767" /><path d="M4 9.500h14v8h-3.500v-3.500h-7v3.500H4z" fill="#3a96dd" /></Icon>
      </TaskButton>
      <TaskButton $w={40} $run>
        <Icon w={22} h={22} c="none"><path d="M1 1l6 .8L13 1l8 .8-.8 6L21 14l-.5 7-7-.5-6 .5L1 20.500l.5-7L1 7z" fill="#f4f4f4" /><T x={11} y={16} s={14} f="Liberation Serif" c="#333">T</T></Icon>
      </TaskButton>
      <TaskButton $w={40} $run $multi>
        <svg width="22" height="22" viewBox="0 0 22 22">
          <path d="M11 11 1.500 5.500A11 11 0 0 1 20.500 5.500L21 6H11z" fill="#ea4335" /><path d="M1.500 5.500A11 11 0 0 0 10 22l5.300-8.500L11 11z" fill="#34a853" /><path d="M20.700 6A11 11 0 0 1 10 22l5.300-8.500L12 6z" fill="#fbbc05" />
          <circle cx="11" cy="11" r="5.300" fill="#fff" /><circle cx="11" cy="11" r="4.200" fill="#4285f4" />
        </svg>
      </TaskButton>
      <TaskButton $w={48} $on>
        <Icon w={21} h={21} c="none"><rect width="21" height="21" rx="4" fill="#b30b00" /><path d="M4.500 15.500C7 14.500 10 9 10 5.500c0-2 1.600-1.500 1.300 0-.5 3.500 2.500 7 5 7.200 1.700.3 1 1.600-.8 1.200-3-.7-7-.2-9.500 1.600-1.300 1-2.500.6-1.500 0z" stroke="#fff" strokeWidth="1.200" /></Icon>
      </TaskButton>
      <Tray>
        <Icon w={15} h={22} c="#fff"><path d="M4.500 1v5M10.500 1v5" /><path d="M1.500 6h12v3c0 4-2 5-4.500 5.500V21H6.500v-6.500C3.500 14 1.500 13 1.500 9z" fill="#fff" stroke="none" /></Icon>
        <Battery>100%</Battery>
        <Slot $w={27}><Icon w={12} h={7} c="#fff" sw={1.300}><path d="M0.500 6.500 6 1l5.500 5.500" /></Icon></Slot>
        <Slot $w={20}><Icon w={17} h={11} c="none"><path d="M3.500 10.500a3.300 3.300 0 0 1 0-6.500 5 5 0 0 1 9-1 4 4 0 0 1 1.500 7.500z" fill="#d0d0d0" /><path d="M4 10.500a3 3 0 0 1 1.500-5.700c3 0 4-1 6.500.2a3 3 0 0 1 3.500 5.500z" fill="#fff" /></Icon></Slot>
        <Slot $w={28}><Icon w={16} h={12} c="#fff" sw={1.200}><path d="M5.500 3.500h9v7h-9M15.500 5.500v3M1 1v3.500c0 2 4 2 4 0V1M3 6v4.500h3" /><path d="M7 5h6v4H7z" fill="#fff" stroke="none" /></Icon></Slot>
        <Slot $w={21}><Icon w={16} h={14} c="#fff" sw={1.100}><path d="M0.800 5h2.500L7 1.500v11L3.300 9H0.800zM9 5c1 1 1 3 0 4" /><path d="M11 3c2.200 2 2.200 6 0 8M13 1c3.300 3 3.300 9 0 12" stroke="#8a8a8a" /></Icon></Slot>
        <Slot $w={28}><Icon w={13} h={13} c="#fff" sw={1.300}><path d="M1 12C1 5 6 1 12.500 1M4 12.500c0-5 3.500-8 8.500-8M7.500 12.500c0-3 2-4.700 5-4.700" /><circle cx="11.500" cy="11.500" r="1.300" fill="#fff" stroke="none" /></Icon></Slot>
        <Slot $w={18}><Ime>中</Ime></Slot>
        <Slot $w={37}><SogouMark s={18} /></Slot>
        <Slot $w={72}><Clock>14:32<br />2022/4/17</Clock></Slot>
        <Slot $w={48}>
          <Icon w={26} h={26} c="none">
            <path d="M1 2h16v12H9.500L6 17.500V14H1z" fill="#fff" /><path d="M3.500 5.500h11M3.500 8.300h11M3.500 11h11" stroke="#1e1e1e" strokeWidth="1.200" />
            <circle cx="16.500" cy="17.500" r="8" fill="#3c3c3c" stroke="#999" strokeWidth="1" /><T x={16.500} y={22} s={12} f="Noto Sans" b c="#fff">1</T>
          </Icon>
        </Slot>
        <Divider $l={0} $r={0} style={{ height: 40 }} />
      </Tray>
    </TaskBar>

    <Popup>
      <PopupItem>添加(<u>A</u>)...</PopupItem>
      <PopupItem>更新(<u>U</u>)...</PopupItem>
      <PopupItem $on>删除(<u>R</u>)...</PopupItem>
    </Popup>

    <ImeBar>
      <ImeLogo><SogouMark s={34} /></ImeLogo>
      <ImeSlot>中</ImeSlot>
      <ImeSlot><Icon w={14} h={14} c="#0a6fdb"><circle cx="3.500" cy="4" r="1.800" strokeWidth="1.600" /><path d="M9 6h3.500v3.500c0 2-1 3-3 3.500v-1.500c1-.5 1.300-1 1.300-2H9z" fill="#0a6fdb" stroke="none" /></Icon></ImeSlot>
      <ImeSlot><Icon w={14} h={16} c="#0a6fdb" sw={1.600}><rect x="4" y="0" width="6" height="10" rx="3" fill="#0a6fdb" stroke="none" /><path d="M1.500 7c0 6.500 11 6.500 11 0M7 12v3.500" /></Icon></ImeSlot>
      <ImeSlot><Icon w={15} h={12} c="#0a6fdb" sw={1.500}><path d="M0.800 0.800h13.400v10.400H0.800z" /><path d="M3 3.800h9M3 6h9" strokeDasharray="1.500 1" /><path d="M3.500 8.500h8" /></Icon></ImeSlot>
      <ImeSlot><Icon w={16} h={14} c="none" fill="#0a6fdb"><path d="M4.500 0c1 2 6 2 7 0L16 3l-1.800 4-1.700-.7V14h-9V6.300L1.800 7 0 3z" /></Icon></ImeSlot>
      <ImeSlot><Icon w={14} h={14} c="none" fill="#3a6fd0"><rect width="6" height="6" rx="1.500" /><rect y="7.500" width="6" height="6" rx="1.500" /><rect x="7.500" y="7.500" width="6" height="6" rx="1.500" /><circle cx="10.500" cy="3" r="2.200" fill="none" stroke="#0a6fdb" strokeWidth="1.600" /></Icon></ImeSlot>
    </ImeBar>
  </Screen>
);

export default App;
